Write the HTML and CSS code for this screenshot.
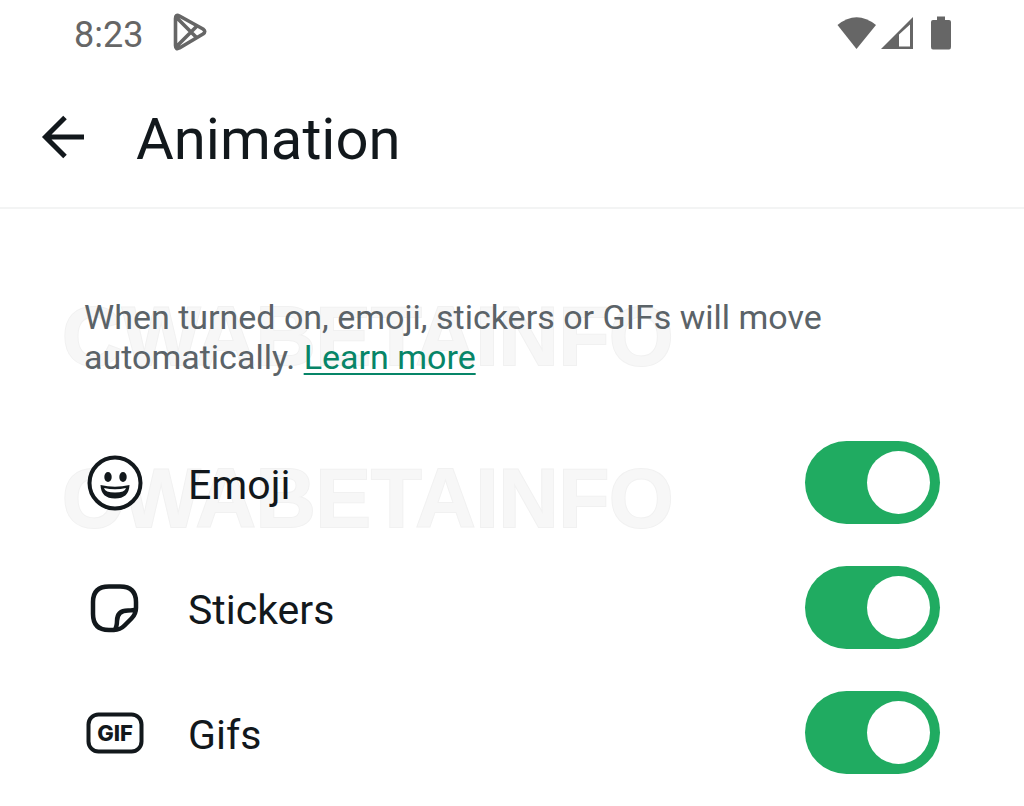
FILE: index.html
```html
<!DOCTYPE html>
<html lang="en">
<head>
<meta charset="utf-8">
<meta name="viewport" content="width=device-width, initial-scale=1">
<title>Animation</title>
<link rel="stylesheet" href="styles.css">
</head>
<body>
<div class="status-bar">
  <time class="clock">8:23</time>
  <svg class="play" width="36" height="40" viewBox="0 0 36 40" aria-hidden="true">
    <path d="M3.500 5.500 Q3.500 1 7.500 3 L31 16 Q34.500 18.500 31 21 L7.500 35 Q3.500 37 3.500 32.500 Z M4 4 L25 25 M4 34 L25 13" fill="none" stroke="#666" stroke-width="3.600" stroke-linejoin="round"/>
  </svg>
  <div class="indicators">
    <svg width="40" height="34" viewBox="0 0 40 34" aria-hidden="true"><path d="M0.500 9 Q19.500 -6.500 39 9 L19.500 33 Z" fill="#666"/></svg>
    <svg width="34" height="34" viewBox="0 0 34 34" aria-hidden="true"><path fill-rule="evenodd" d="M0 33 L32 1 V33 Z M18 18.500 V30.500 H29 V8.500 Z" fill="#666"/></svg>
    <svg class="battery" width="20" height="34" viewBox="0 0 20 34" aria-hidden="true"><path d="M6 0.500 H14 V4 H18 Q20 4 20 6 V31 Q20 33.500 18 33.500 H2 Q0 33.500 0 31 V6 Q0 4 2 4 H6 Z" fill="#666"/></svg>
  </div>
</div>
<header class="app-bar">
  <button class="back" type="button" aria-label="Back">
    <svg width="44" height="44" viewBox="0 0 44 44" aria-hidden="true"><path d="M44 22 H6 M25 2.500 L5.500 22 L25 41.500" fill="none" stroke="#12181c" stroke-width="5"/></svg>
  </button>
  <h1>Animation</h1>
</header>
<main>
  <section class="intro">
    <span class="watermark" aria-hidden="true">CWABETAINFO</span>
    <p>When turned on, emoji, stickers or GIFs will move automatically. <a href="#learn-more">Learn more</a></p>
  </section>
  <section class="options">
    <div class="option">
      <span class="watermark" aria-hidden="true">CWABETAINFO</span>
      <svg class="icon" width="58" height="58" viewBox="0 0 58 58" aria-hidden="true">
        <circle cx="29" cy="29" r="25.500" fill="#fff" stroke="#12181c" stroke-width="4"/>
        <ellipse cx="22" cy="23" rx="3.700" ry="5" fill="#12181c"/><ellipse cx="37" cy="23" rx="3.700" ry="5" fill="#12181c"/>
        <path d="M14.500 31 Q29 34.500 43.500 31 Q43 44.500 29 44.500 Q15 44.500 14.500 31 Z" fill="#12181c"/>
        <path d="M18 34 Q29 36.500 40 34 Q39 38.500 29 38.500 Q19 38.500 18 34 Z" fill="#fff"/>
      </svg>
      <label for="emoji">Emoji</label>
      <input class="switch" id="emoji" type="checkbox" role="switch" checked>
    </div>
    <div class="option">
      <svg class="icon" width="58" height="58" viewBox="0 0 58 58" aria-hidden="true">
        <path d="M25 51 H23 Q7 51 7 35 V23 Q7 7.500 23 7.500 H34 Q50 7.500 50 23 V29 Q50 35 45.500 39.500 L38.500 46.500 Q34 51 28 51 Z M28.500 51 Q31 48 31 42 Q31 31.500 42 31.500 Q48 31.500 50 30" fill="none" stroke="#12181c" stroke-width="4.500"/>
      </svg>
      <label for="stickers">Stickers</label>
      <input class="switch" id="stickers" type="checkbox" role="switch" checked>
    </div>
    <div class="option">
      <svg class="icon" width="58" height="58" viewBox="0 0 58 58" aria-hidden="true">
        <rect x="2.500" y="10.500" width="53" height="37" rx="10" fill="none" stroke="#12181c" stroke-width="4"/>
        <text class="gif-text" x="29" y="37" text-anchor="middle">GIF</text>
      </svg>
      <label for="gifs">Gifs</label>
      <input class="switch" id="gifs" type="checkbox" role="switch" checked>
    </div>
  </section>
</main>
</body>
</html>
```
FILE: styles.css
```css
* { box-sizing: border-box; }
body {
  margin: 0;
  background: #fff;
  color: #12181c;
  font-family: Roboto, "Liberation Sans", sans-serif;
}
svg { display: block; flex: none; }
.status-bar {
  display: flex;
  align-items: center;
  height: 66px;
  padding: 0 73px 0 74px;
  color: #666;
}
.clock {
  padding-top: 4px;
  font-size: 36px;
  line-height: 40px;
}
.play { margin-left: 29px; }
.indicators {
  display: flex;
  align-items: center;
  gap: 4px;
  margin-left: auto;
}
.battery { margin-left: 12px; }
.app-bar {
  display: flex;
  align-items: center;
  gap: 52px;
  height: 143px;
  padding: 0 40px;
  border-bottom: 2px solid #f3f4f4;
}
.back {
  padding: 0;
  border: 0;
  background: none;
  color: inherit;
  cursor: pointer;
}
h1 {
  margin: 0;
  padding-top: 4px;
  font-size: 58px;
  font-weight: 400;
  line-height: 68px;
}
.intro {
  position: relative;
  padding: 88px 84px 0;
}
.intro p {
  position: relative;
  max-width: 760px;
  margin: 0;
  color: #5b6368;
  font-size: 34px;
  line-height: 40px;
}
.intro a {
  color: #078568;
  text-decoration-thickness: 2px;
  text-underline-offset: 4px;
}
.watermark {
  position: absolute;
  left: 62px;
  bottom: 0;
  color: #f7f7f7;
  font-family: "Liberation Sans", sans-serif;
  font-size: 83px;
  font-weight: 700;
  line-height: 80px;
  -webkit-text-stroke: 2px #f1f1f1;
  paint-order: stroke fill;
  pointer-events: none;
}
.option .watermark { bottom: 6px; }
.options { padding-top: 43px; }
.option {
  position: relative;
  display: flex;
  align-items: center;
  height: 125px;
  padding: 0 84px 0 86px;
}
.option label {
  flex: 1;
  margin-left: 44px;
  padding-top: 4px;
  font-size: 41px;
  line-height: 48px;
}
.icon, .option label, .switch { position: relative; }
.switch {
  appearance: none;
  width: 135px;
  height: 83px;
  margin: 0;
  padding: 10px;
  border-radius: 42px;
  background: #b5babd;
  cursor: pointer;
}
.switch::before {
  content: "";
  display: block;
  width: 63px;
  height: 63px;
  border-radius: 50%;
  background: #fff;
}
.switch:checked { background: #20ab61; }
.switch:checked::before { margin-left: auto; }
.gif-text {
  fill: #12181c;
  font-family: Inter, sans-serif;
  font-size: 22px;
  font-weight: 800;
}
```
